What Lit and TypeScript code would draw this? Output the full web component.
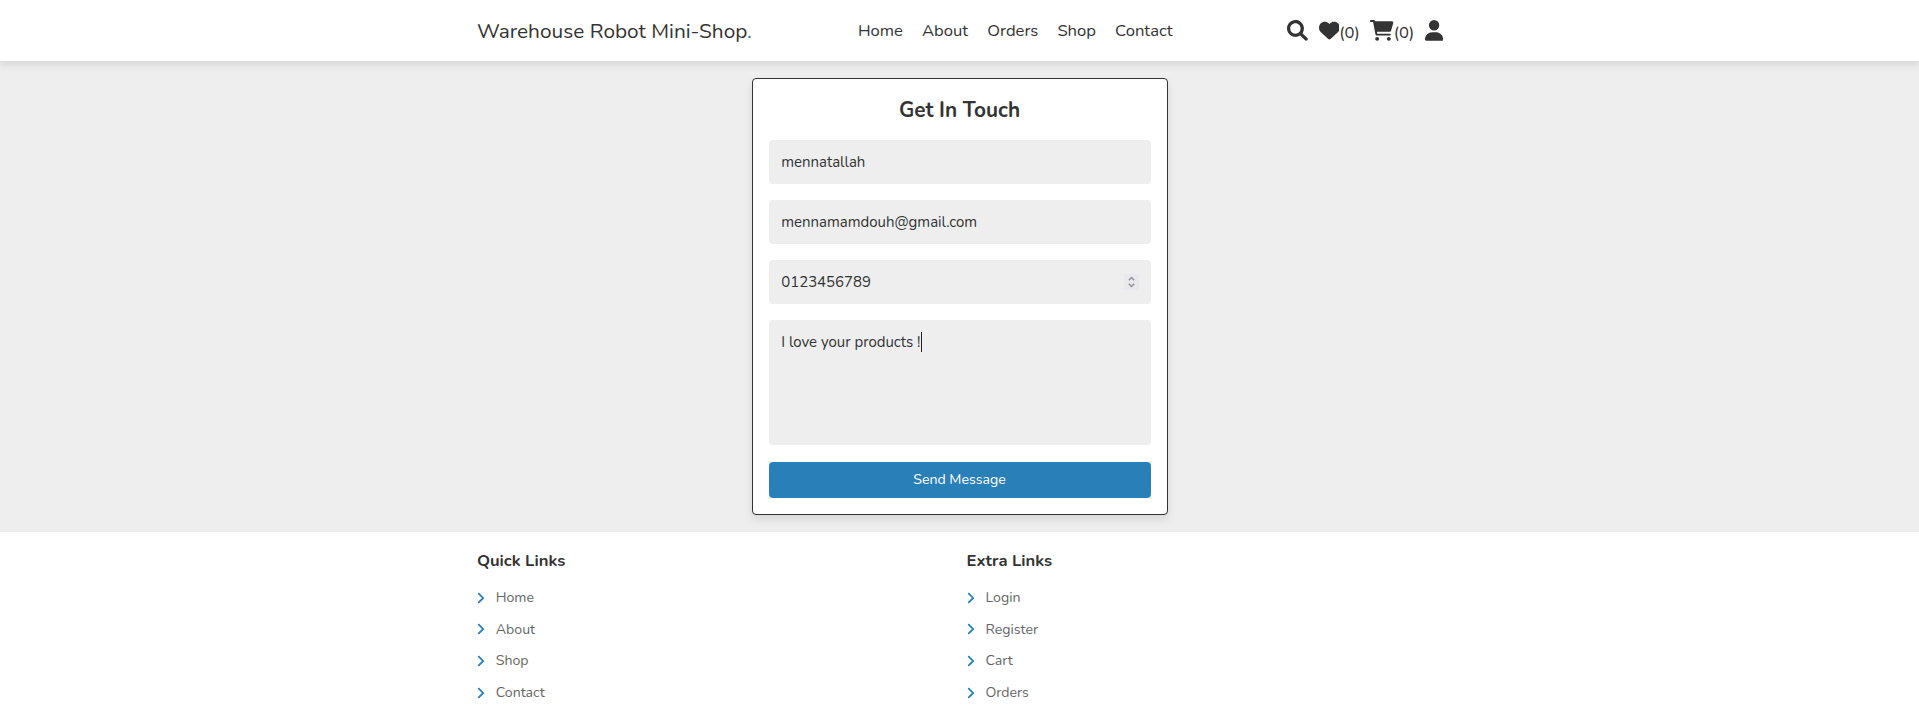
import { LitElement, html, css } from "lit";
import { customElement } from "lit/decorators.js";

const icon = (width: number, path: string) => html`
  <svg class="icon" viewBox="0 0 ${width} 512" style="width:${(width / 512) * 20.8}px"><path d=${path}></path></svg>`;

const SEARCH = "M500.3 443.7l-119.7-119.7c27.22-40.41 40.65-90.9 33.46-144.7C401.8 87.79 326.8 13.32 235.2 1.723C99.01-15.51-15.51 99.01 1.724 235.2c11.6 91.64 86.08 166.7 177.6 178.9c53.8 7.189 104.3-6.236 144.7-33.46l119.7 119.7c15.62 15.62 40.95 15.62 56.57 0C515.9 484.7 515.9 459.3 500.3 443.7zM79.1 208c0-70.58 57.42-128 128-128s128 57.42 128 128c0 70.58-57.42 128-128 128S79.1 278.6 79.1 208z";
const HEART = "M47.6 300.4L228.3 469.1c7.5 7 17.4 10.9 27.7 10.9s20.2-3.9 27.7-10.9L464.4 300.4c30.4-28.3 47.6-68 47.6-109.5v-5.8c0-69.9-50.5-129.5-119.4-141C347 36.5 300.6 51.4 268 84L256 96 244 84c-32.6-32.6-79-47.5-124.6-39.9C50.5 55.6 0 115.2 0 185.1v5.8c0 41.5 17.2 81.2 47.6 109.5z";
const CART = "M96 0C107.5 0 117.4 8.19 119.6 19.51L121.1 32H541.8C562.1 32 578.3 52.25 572.6 72.66L518.6 264.7C514.7 278.5 502.1 288 487.8 288H170.7L179.9 336H488C501.3 336 512 346.7 512 360C512 373.3 501.3 384 488 384H159.1C148.5 384 138.6 375.8 136.4 364.5L76.14 48H24C10.75 48 0 37.25 0 24C0 10.75 10.75 0 24 0H96zM128 464C128 437.5 149.5 416 176 416C202.5 416 224 437.5 224 464C224 490.5 202.5 512 176 512C149.5 512 128 490.5 128 464zM512 464C512 490.5 490.5 512 464 512C437.5 512 416 490.5 416 464C416 437.5 437.5 416 464 416C490.5 416 512 437.5 512 464z";
const USER = "M224 256A128 128 0 1 0 224 0a128 128 0 1 0 0 256zM178.3 304C79.8 304 0 383.8 0 482.3C0 498.7 13.3 512 29.7 512H418.3c16.4 0 29.7-13.3 29.7-29.7C448 383.8 368.2 304 269.7 304H178.3z";
const ANGLE = "M64 448c-8.188 0-16.38-3.125-22.62-9.375c-12.5-12.5-12.5-32.75 0-45.25L178.8 256L41.38 118.6c-12.5-12.5-12.5-32.75 0-45.25s32.75-12.5 45.25 0l160 160c12.5 12.5 12.5 32.75 0 45.25l-160 160C80.38 444.9 72.19 448 64 448z";

@customElement("app-root")
class AppRoot extends LitElement {
  static styles = css`
    :host { display: block; min-height: 728px; background: #fff; color: #333; font-family: Nunito, "Open Sans", sans-serif; }
    * { box-sizing: border-box; margin: 0; }
    .wrap { width: 967.2px; margin: 0 auto; padding-left: 1px; }
    header { position: relative; height: 61px; background: #fff; box-shadow: 0 4px 8px rgba(0, 0, 0, 0.1); }
    header .wrap { height: 61px; display: flex; align-items: center; }
    .logo { font-size: 20.8px; line-height: 28px; letter-spacing: 0.02px; width: 381px; }
    .logo span { color: #2980b9; }
    nav { display: flex; gap: 19.1px; font-size: 16.64px; line-height: 23px; }
    .icons { display: flex; gap: 10.6px; font-size: 16.64px; margin-left: auto; }
    .item { display: flex; align-items: flex-start; height: 23px; line-height: 27px; }
    .icon { height: 20.8px; display: block; fill: #333; margin-top: 0.8px; }
    main { height: 471px; background: #eee; padding-top: 17px; }
    form { width: 416px; height: 437px; margin: 0 auto; padding: 16px 16px 0; background: #fff; border: 1px solid #333; border-radius: 4px; box-shadow: 0 4px 8px rgba(0, 0, 0, 0.1); }
    h3 { font-size: 20.8px; line-height: 30px; text-align: center; margin-bottom: 15px; font-weight: 700; }
    .field { display: flex; justify-content: space-between; align-items: center; height: 44px; margin-bottom: 16px; padding: 0 12px 0 12.7px; border-radius: 4px; background: #eee; font-size: 14.976px; line-height: 20px; }
    .area { height: 125px; margin-bottom: 17px; padding-top: 12px; align-items: flex-start; justify-content: flex-start; }
    .caret { width: 1px; height: 20px; background: #222; }
    .spin { width: 15px; height: 16px; background: #e9e9ed; fill: none; stroke: #8f8f9d; stroke-width: 1.5; }
    .send { display: block; width: 100%; height: 36px; border: 0; border-radius: 4px; background: #2980b9; color: #fff; font: 14.144px/19px Nunito, "Open Sans", sans-serif; padding: 0 0 2px; }
    footer .wrap { display: grid; grid-template-columns: 1fr 1fr; column-gap: 13.2px; padding-top: 17px; }
    h4 { font-size: 16.64px; line-height: 23px; margin-bottom: 10px; font-weight: 700; }
    .link { display: flex; align-items: center; height: 31.6px; font-size: 14.144px; color: #666; }
    .link svg { width: 7.07px; height: 14.144px; margin-right: 11.8px; fill: #2980b9; }
  `;

  render() {
    const column = (title: string, links: string[]) => html`
      <div>
        <h4>${title}</h4>
        ${links.map((l) => html`<div class="link"><svg viewBox="0 0 256 512"><path d=${ANGLE}></path></svg><span>${l}</span></div>`)}
      </div>`;
    return html`
      <header><div class="wrap">
        <div class="logo">Warehouse Robot Mini-Shop<span>.</span></div>
        <nav>${["Home", "About", "Orders", "Shop", "Contact"].map((t) => html`<span>${t}</span>`)}</nav>
        <div class="icons">
          <div class="item">${icon(512, SEARCH)}</div>
          <div class="item">${icon(512, HEART)}<span>(0)</span></div>
          <div class="item">${icon(576, CART)}<span>(0)</span></div>
          <div class="item">${icon(448, USER)}</div>
        </div>
      </div></header>
      <main><form>
        <h3>Get In Touch</h3>
        <div class="field">mennatallah</div>
        <div class="field">mennamamdouh@gmail.com</div>
        <div class="field"><span>0123456789</span><svg class="spin" viewBox="0 0 15 16"><path d="M4.800 6.200 7.500 3.500 10.200 6.200M4.800 9.800 7.500 12.500 10.200 9.800"></path></svg></div>
        <div class="field area"><span>I love your products !</span><span class="caret"></span></div>
        <button class="send" type="button">Send Message</button>
      </form></main>
      <footer><div class="wrap">
        ${column("Quick Links", ["Home", "About", "Shop", "Contact"])}
        ${column("Extra Links", ["Login", "Register", "Cart", "Orders"])}
      </div></footer>`;
  }
}
